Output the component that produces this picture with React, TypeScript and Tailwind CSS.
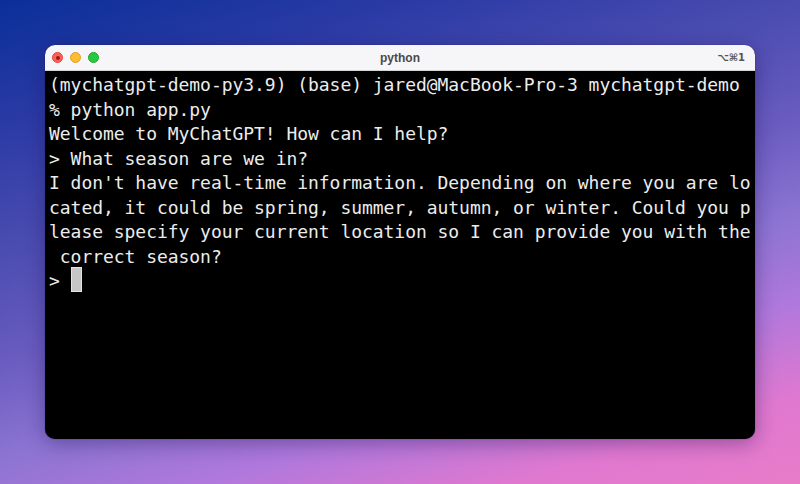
const lines = [
  "(mychatgpt-demo-py3.9) (base) jared@MacBook-Pro-3 mychatgpt-demo",
  "% python app.py",
  "Welcome to MyChatGPT! How can I help?",
  "> What season are we in?",
  "I don't have real-time information. Depending on where you are lo",
  "cated, it could be spring, summer, autumn, or winter. Could you p",
  "lease specify your current location so I can provide you with the",
  " correct season?",
];

function TrafficLights() {
  return (
    <div className="flex items-center gap-[7px]">
      <span className="flex h-[11px] w-[11px] items-center justify-center rounded-full border border-[#e0443e] bg-[#ff5f57]">
        <span className="h-[4px] w-[4px] rounded-full bg-[#8f1d17]" />
      </span>
      <span className="h-[11px] w-[11px] rounded-full border border-[#dea123] bg-[#febc2e]" />
      <span className="h-[11px] w-[11px] rounded-full border border-[#1aab29] bg-[#28c840]" />
    </div>
  );
}

export default function App() {
  return (
    <div className="h-[484px] w-[800px] overflow-hidden bg-[linear-gradient(163deg,#0a2f98_0%,#2a3aa5_17%,#4a4cb0_34%,#6a5cc0_50%,#8c74d2_63%,#b078dc_75%,#e078d0_88%,#e87cc8_100%)] px-[45px] pt-[45px]">
      <div className="flex h-[394px] flex-col overflow-hidden rounded-[10px] bg-black shadow-[0_0_1px_rgba(20,10,80,0.7),0_4px_20px_rgba(30,15,80,0.4)]">
        <div className="relative flex h-[26px] shrink-0 items-center justify-between border-b border-[#d4d4d4] bg-[#f6f5f7] pl-[7px] pr-[10px]">
          <TrafficLights />
          <span className="absolute left-0 right-0 text-center font-['Liberation_Sans',sans-serif] text-[12px] font-bold text-[#4a4a4a]">
            python
          </span>
          <span className="font-['DejaVu_Sans','Liberation_Sans',sans-serif] text-[10px] font-bold text-[#555555]">
            ⌥⌘1
          </span>
        </div>
        <div className="whitespace-pre pl-[4px] pt-[2px] font-['DejaVu_Sans_Mono',monospace] text-[18px] leading-[24.5px] tracking-[-0.045px] text-[#ececec]">
          {lines.map((line) => (
            <div key={line}>{line}</div>
          ))}
          <div className="flex items-start">
            <span>&gt; </span>
            <span className="-mt-[2px] h-[25px] w-[11px] border border-[#e4e4e4] bg-[#c6c6c6]" />
          </div>
        </div>
      </div>
    </div>
  );
}
